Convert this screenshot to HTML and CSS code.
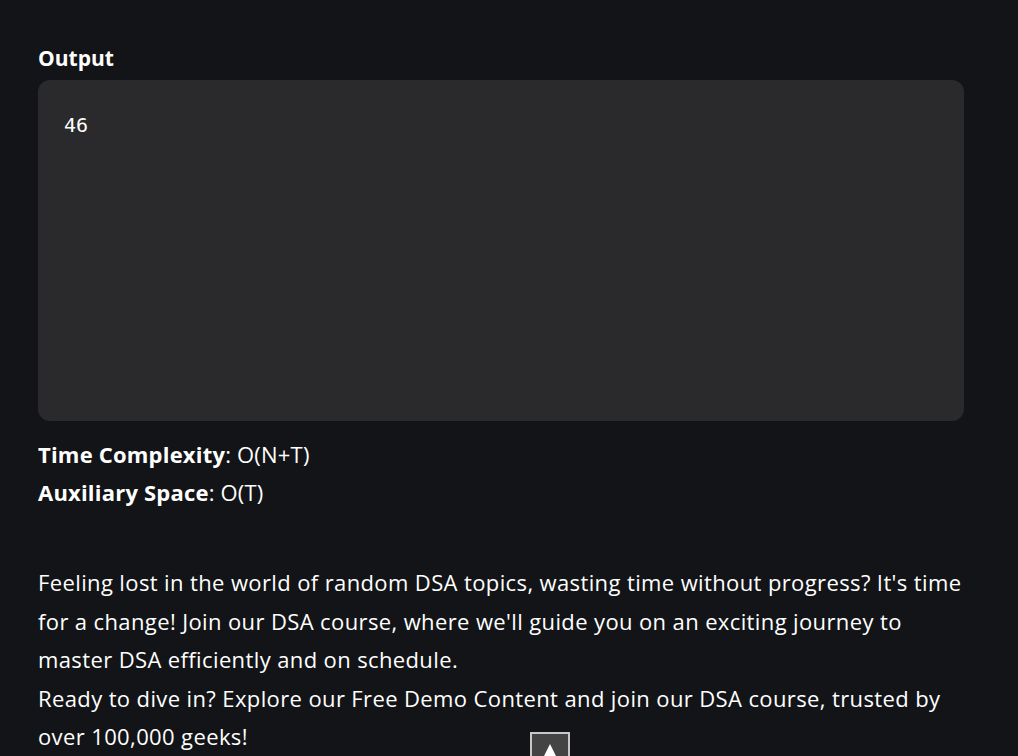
FILE: index.html
```html
<!DOCTYPE html>
<html>
<head>
<meta charset="utf-8">
<link rel="stylesheet" href="styles.css">
</head>
<body>
<main class="article">
  <h3 class="out-title">Output</h3>
  <pre class="output-box">46</pre>
  <p class="complexity"><b>Time Complexity</b>: O(N+T)<br><b>Auxiliary Space</b>: O(T)</p>
  <p class="promo">Feeling lost in the world of random DSA topics, wasting time without progress? It's time for a change! Join our DSA course, where we'll guide you on an exciting journey to master DSA efficiently and on schedule.<br>Ready to dive in? Explore our Free Demo Content and join our DSA course, trusted by over 100,000 geeks!</p>
</main>
<button class="to-top" aria-label="Back to top"><span class="tri"></span></button>
</body>
</html>
```
FILE: styles.css
```css
html, body {
  margin: 0;
  padding: 0;
  background: #131417;
  overflow: hidden;
}
body {
  font-family: "Open Sans", "Noto Sans", sans-serif;
  color: #ffffff;
  height: 756px;
}
.article {
  padding: 44px 54px 0 38px;
}
.out-title {
  margin: 0 0 8px;
  font-size: 21px;
  font-weight: 700;
  line-height: 28px;
}
.output-box {
  margin: 0;
  background: #2a2a2c;
  border-radius: 12px;
  height: 341px;
  box-sizing: border-box;
  padding: 34px 26px;
  font-family: "DejaVu Sans Mono", monospace;
  font-size: 20px;
  line-height: 22px;
  font-weight: 400;
  color: #ffffff;
}
.complexity {
  margin: 14px 0 0;
  font-size: 22px;
  line-height: 38px;
  letter-spacing: 0.2px;
}
.promo {
  margin: 52px 0 0;
  font-size: 22px;
  line-height: 38.5px;
  letter-spacing: 0.38px;
}
.to-top {
  position: fixed;
  left: 530px;
  top: 732px;
  width: 40px;
  height: 40px;
  background: #444444;
  border: 2px solid #c8c8c8;
  padding: 0;
  box-sizing: border-box;
  display: flex;
  justify-content: center;
}
.tri {
  margin-top: 10px;
  width: 0;
  height: 0;
  border-left: 8px solid transparent;
  border-right: 8px solid transparent;
  border-bottom: 16px solid #ffffff;
}
```
